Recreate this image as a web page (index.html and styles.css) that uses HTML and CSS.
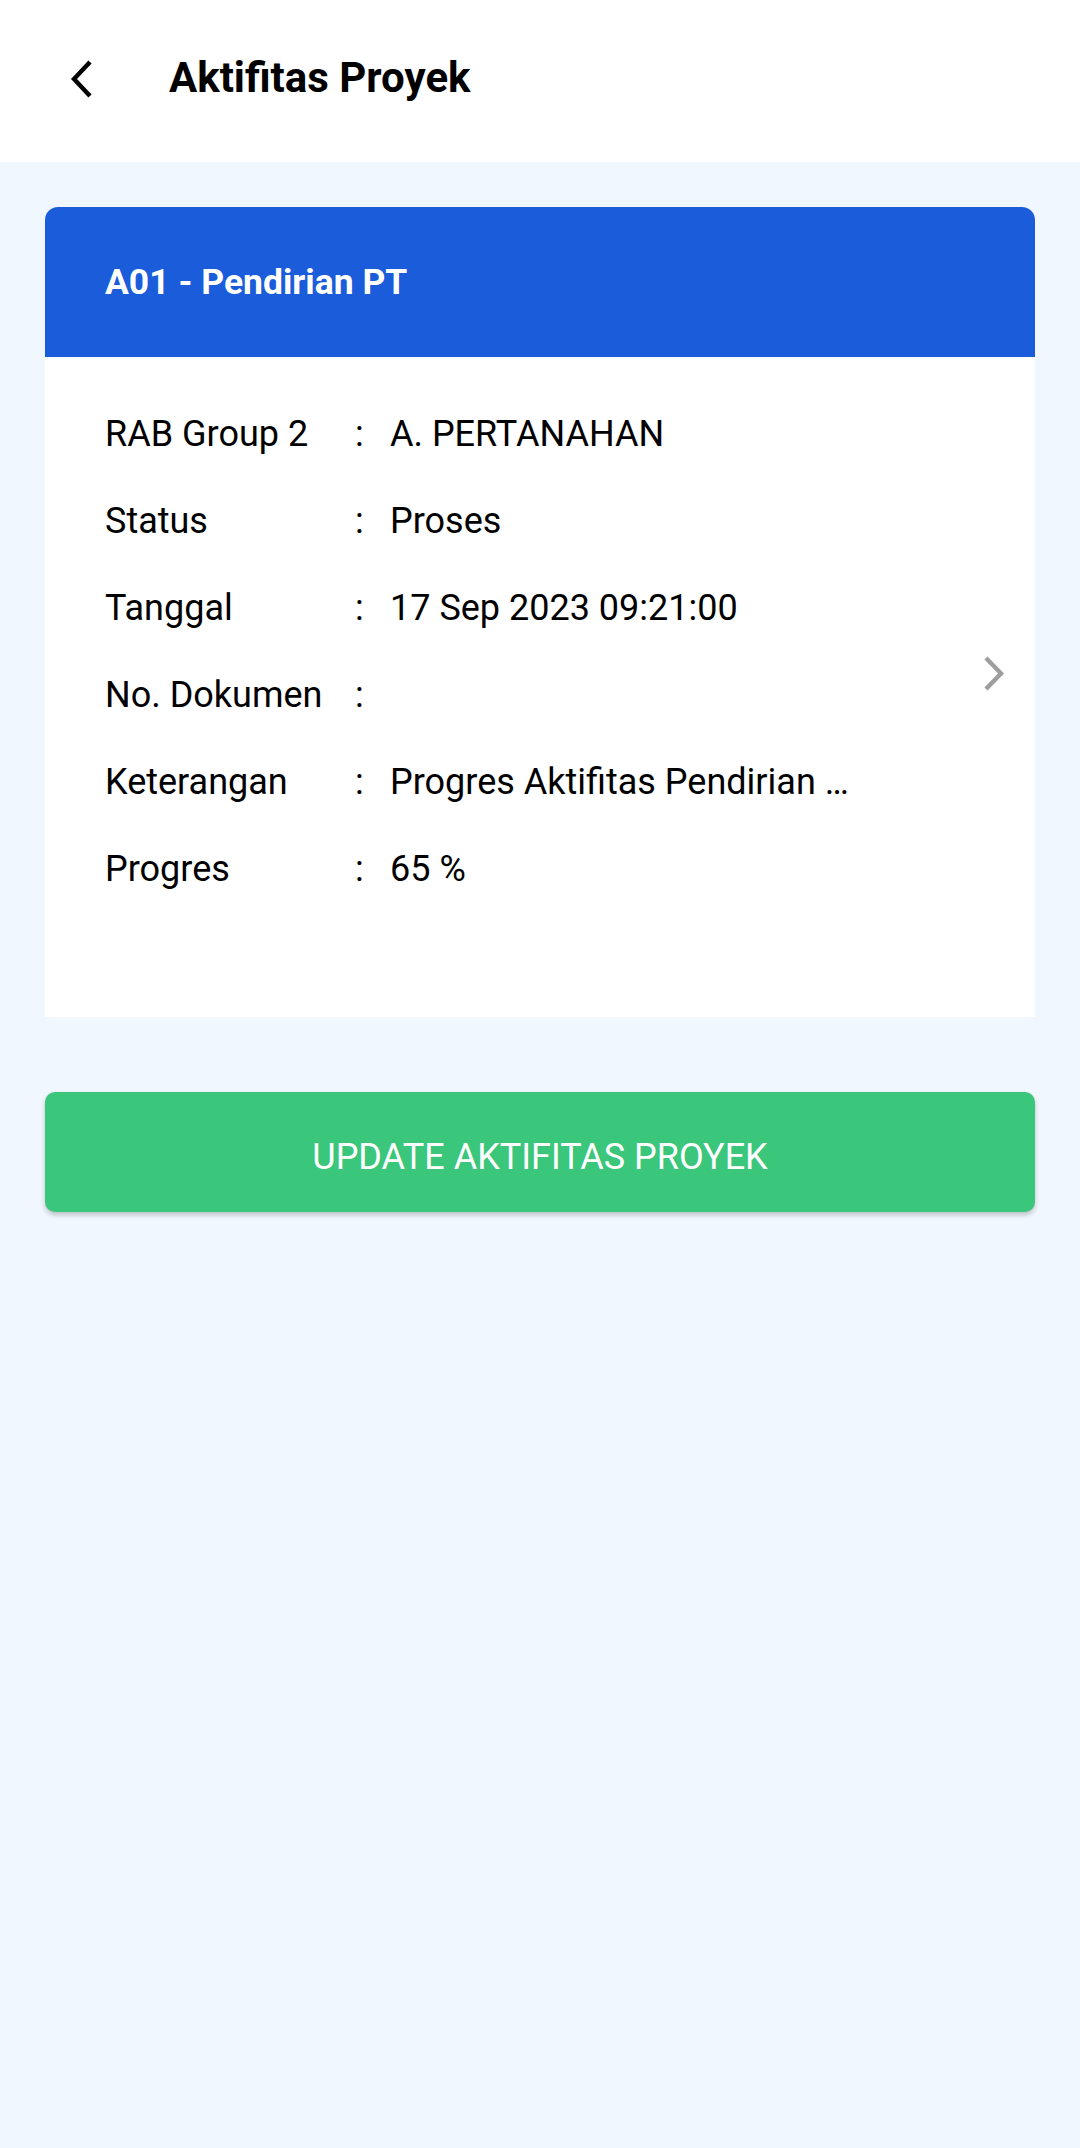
FILE: index.html
```html
<!DOCTYPE html>
<html lang="id">
<head>
<meta charset="utf-8">
<title>Aktifitas Proyek</title>
<link rel="stylesheet" href="styles.css">
</head>
<body>
<header class="appbar">
  <button class="back" aria-label="Kembali">
    <svg width="24" height="38" viewBox="0 0 24 38"><path d="M20 2 L4 19 L20 36" fill="none" stroke="#000" stroke-width="4.4"/></svg>
  </button>
  <h1 class="title">Aktifitas Proyek</h1>
</header>
<main class="content">
  <section class="card">
    <div class="card-head">A01 - Pendirian PT</div>
    <div class="card-body">
      <div class="rows">
        <div class="row"><span class="label">RAB Group 2</span><span class="colon">:</span><span class="value">A. PERTANAHAN</span></div>
        <div class="row"><span class="label">Status</span><span class="colon">:</span><span class="value">Proses</span></div>
        <div class="row"><span class="label">Tanggal</span><span class="colon">:</span><span class="value">17 Sep 2023 09:21:00</span></div>
        <div class="row"><span class="label">No. Dokumen</span><span class="colon">:</span><span class="value"></span></div>
        <div class="row"><span class="label">Keterangan</span><span class="colon">:</span><span class="value">Progres Aktifitas Pendirian …</span></div>
        <div class="row"><span class="label">Progres</span><span class="colon">:</span><span class="value">65 %</span></div>
      </div>
      <div class="chev">
        <svg width="24" height="38" viewBox="0 0 24 38"><path d="M3 2 L18 17.5 L3 33" fill="none" stroke="#9e9e9e" stroke-width="4.4"/></svg>
      </div>
    </div>
  </section>
  <button class="update">UPDATE AKTIFITAS PROYEK</button>
</main>
</body>
</html>
```
FILE: styles.css
```css
* { box-sizing: border-box; }
html, body {
  margin: 0;
  padding: 0;
  background: #f1f7fe;
  font-family: Roboto, "Noto Sans", sans-serif;
  color: #000;
}
.appbar {
  height: 162px;
  background: #fff;
  display: flex;
  align-items: center;
  padding-left: 70px;
}
.back {
  border: 0;
  background: none;
  padding: 0;
  width: 24px;
  height: 38px;
  display: flex;
  margin-top: -4px;
}
.title {
  margin: 0 0 0 75px;
  font-size: 42px;
  font-weight: 700;
  line-height: 1;
  margin-top: -6px;
}
.content {
  padding: 45px;
}
.card {
  background: #fff;
  border-radius: 13px 13px 0 0;
  overflow: hidden;
}
.card-head {
  height: 150px;
  background: #1b5cdb;
  color: #fff;
  font-size: 35.5px;
  font-weight: 700;
  display: flex;
  align-items: center;
  padding-left: 60px;
}
.card-body {
  display: flex;
  height: 660px;
  padding: 34px 28px 104px 60px;
}
.rows {
  flex: 1;
  display: flex;
  flex-direction: column;
}
.row {
  display: grid;
  grid-template-columns: 250px 35px 1fr;
  height: 87px;
  line-height: 87px;
  font-size: 36px;
  white-space: nowrap;
}
.chev {
  display: flex;
  align-items: center;
  padding-top: 46px;
}
.update {
  display: block;
  width: 100%;
  height: 120px;
  margin-top: 75px;
  padding: 10px 0 0;
  border: 0;
  border-radius: 10px;
  background: #3ac67b;
  color: #fff;
  font-family: Roboto, "Noto Sans", sans-serif;
  font-size: 36px;
  font-weight: 400;
  box-shadow: 0 3px 5px rgba(0,0,0,0.22);
}
```
